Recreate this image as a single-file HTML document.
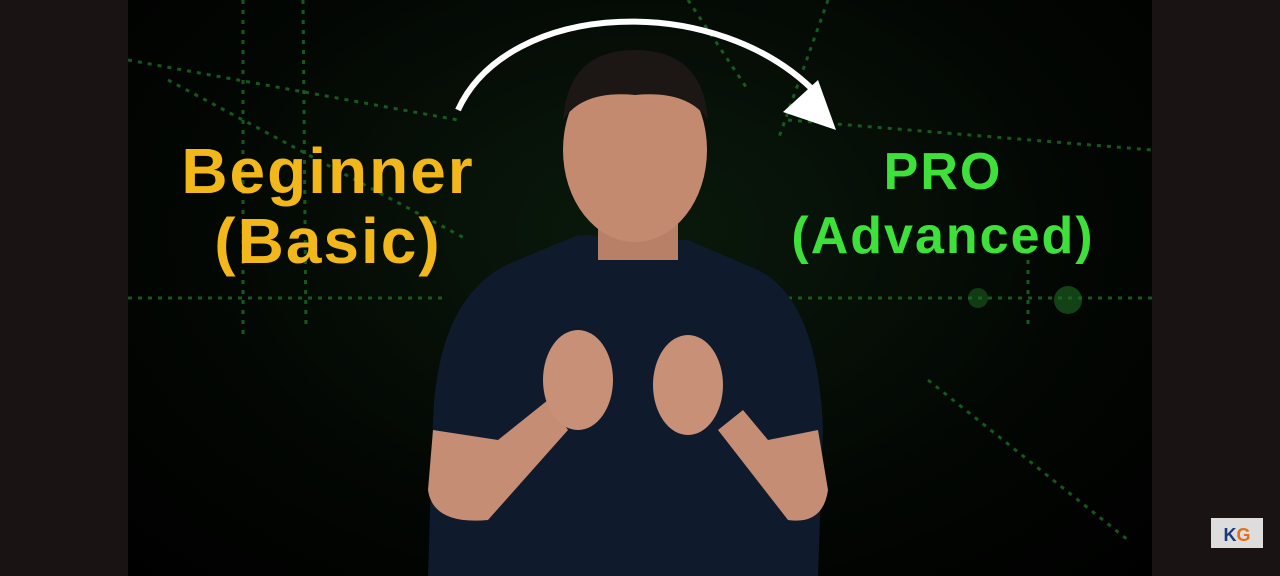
<!DOCTYPE html>
<html><head><style>
body{margin:0;width:1280px;height:576px;overflow:hidden;background:#1a1313;position:relative;font-family:"Liberation Sans",sans-serif}
.v{position:absolute;left:128px;top:0;width:1024px;height:576px;background:radial-gradient(ellipse at 50% 40%,#0a1a0c 0%,#030703 60%,#000 100%);overflow:hidden}
.t{position:absolute;font-weight:bold;text-align:center;white-space:nowrap}
</style></head><body>
<div class="v">
<svg width="1024" height="576" style="position:absolute;left:0;top:0">
<g stroke="#1f7a2a" stroke-width="3" opacity=".7" stroke-dasharray="4 6">
<line x1="115" y1="0" x2="115" y2="340"/><line x1="175" y1="0" x2="178" y2="330"/>
<line x1="0" y1="60" x2="330" y2="120"/><line x1="0" y1="298" x2="320" y2="298"/>
<line x1="40" y1="80" x2="340" y2="240"/><line x1="660" y1="120" x2="1024" y2="150"/>
<line x1="660" y1="298" x2="1024" y2="298"/><line x1="900" y1="250" x2="900" y2="330"/>
<line x1="700" y1="0" x2="650" y2="140"/><line x1="560" y1="0" x2="620" y2="90"/>
<line x1="800" y1="380" x2="1000" y2="540"/>
</g>
<circle cx="940" cy="300" r="14" fill="#1d6b22" opacity=".6"/>
<circle cx="850" cy="298" r="10" fill="#1d6b22" opacity=".5"/>
<path d="M330 110 C380 0 590 -10 690 95" fill="none" stroke="#fff" stroke-width="6"/>
<polygon points="708,130 655,112 690,80" fill="#fff"/>
<path d="M300 576 L305 420 Q310 290 390 260 L450 235 L560 240 L630 270 Q690 300 695 430 L690 576 Z" fill="#0f1a2c"/>
<path d="M305 430 L300 490 Q305 525 360 520 L440 430 L420 400 L370 440 Z" fill="#c48d74"/>
<path d="M690 430 L700 490 Q695 525 660 520 L590 430 L615 410 L640 440 Z" fill="#c48d74"/>
<ellipse cx="450" cy="380" rx="35" ry="50" fill="#c89076"/>
<ellipse cx="560" cy="385" rx="35" ry="50" fill="#c89076"/>
<rect x="470" y="190" width="80" height="70" fill="#b98068"/>
<ellipse cx="507" cy="150" rx="72" ry="92" fill="#c48a70"/>
<path d="M435 120 Q440 50 507 50 Q575 50 580 120 Q560 90 507 95 Q455 90 435 120Z" fill="#1c1614"/>
</svg>
<div class="t" style="left:40px;top:136px;width:320px;color:#f2b71a;font-size:64px;line-height:70px;letter-spacing:2px">Beginner<br>(Basic)</div>
<div class="t" style="left:660px;top:140px;width:310px;color:#3ee03a;font-size:52px;line-height:64px;letter-spacing:2px">PRO<br>(Advanced)</div>
</div>
<div style="position:absolute;left:1211px;top:518px;width:52px;height:30px;background:#ddd;font-size:18px;font-weight:bold;text-align:center;line-height:34px;color:#1a3a7a">K<span style="color:#e07020">G</span></div>
</body></html>
